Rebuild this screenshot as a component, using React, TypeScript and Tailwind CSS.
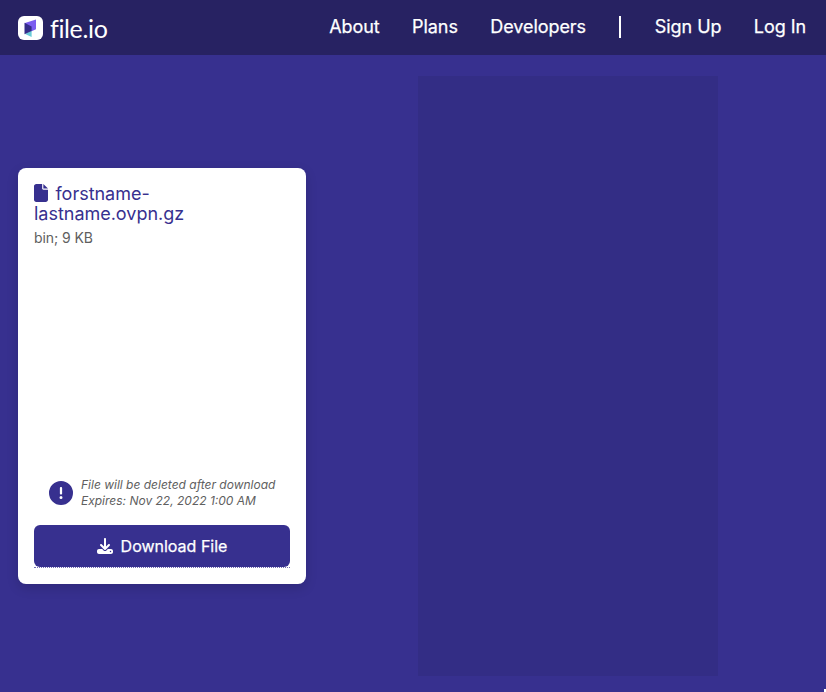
import React from "react";
import { FaFile, FaDownload, FaCircleExclamation } from "react-icons/fa6";

function Logo() {
  return (
    <a className="flex items-center">
      <svg className="h-6 w-[25px]" viewBox="0 0 25 24">
        <rect width="25" height="24" rx="6" fill="#fff" />
        <path d="M7 6.9 18 3.4v9.8L13.6 15.2 7 14z" fill="#7b5cf0" />
        <path d="M7.2 18 13.6 14.6v6.3z" fill="#68cbd8" />
        <path d="M6.5 6.7 13.6 10.4V15L6.5 18.2z" fill="#342c89" />
      </svg>
      <span className="ml-[7px] font-['Lato',sans-serif] text-[25px] leading-6 tracking-[-0.35px]">
        file.io
      </span>
    </a>
  );
}

export default function App() {
  return (
    <div className="relative h-[692px] w-[826px] overflow-hidden bg-[#37308f] font-['Inter',sans-serif] text-white">
      <header className="flex h-[55px] items-center justify-between bg-[#272262] pl-[18px] pr-5">
        <Logo />
        <nav className="flex items-center gap-[32.4px] pb-0.5 text-lg leading-6 tracking-[-0.06px] [-webkit-text-stroke:0.25px_white]">
          <a>About</a>
          <a>Plans</a>
          <a>Developers</a>
          <span className="mx-px h-[22px] w-0.5 bg-white" />
          <a>Sign Up</a>
          <a>Log In</a>
        </nav>
      </header>
      <main className="flex items-start">
        <section className="mt-[113px] ml-[18px] flex h-[416px] w-72 flex-col rounded-lg bg-white p-4 shadow-[0_4px_12px_rgba(0,0,0,0.15)]">
          <h1 className="text-lg leading-5 tracking-[-0.02px] text-[#37308f]">
            <FaFile className="mr-[7.5px] inline h-[18px] w-[14px] align-[-2px]" preserveAspectRatio="none" />
            forstname-
            <br />
            lastname.ovpn.gz
          </h1>
          <p className="mt-1 text-sm leading-5 tracking-[-0.08px] text-[#606060]">bin; 9 KB</p>
          <div className="mt-auto flex items-center pl-[15px]">
            <FaCircleExclamation className="size-6 text-[#37308f]" />
            <p className="ml-2 text-xs leading-4 whitespace-nowrap text-[#606060] italic">
              File will be deleted after download
              <br />
              Expires: Nov 22, 2022 1:00 AM
            </p>
          </div>
          <div className="mt-4 border-b border-dotted border-[#7570b3]">
            <button className="flex h-[42px] w-full items-center justify-center gap-2 rounded-md bg-[#37308f] text-base [-webkit-text-stroke:0.25px_white]">
              <FaDownload className="size-4" strokeWidth="0" />
              Download File
            </button>
          </div>
        </section>
        <aside className="mt-[21px] ml-28 h-[600px] w-[300px] bg-[#332d85]" />
      </main>
      <span className="absolute right-0 bottom-0 h-[3px] w-0.5 bg-white" />
    </div>
  );
}
